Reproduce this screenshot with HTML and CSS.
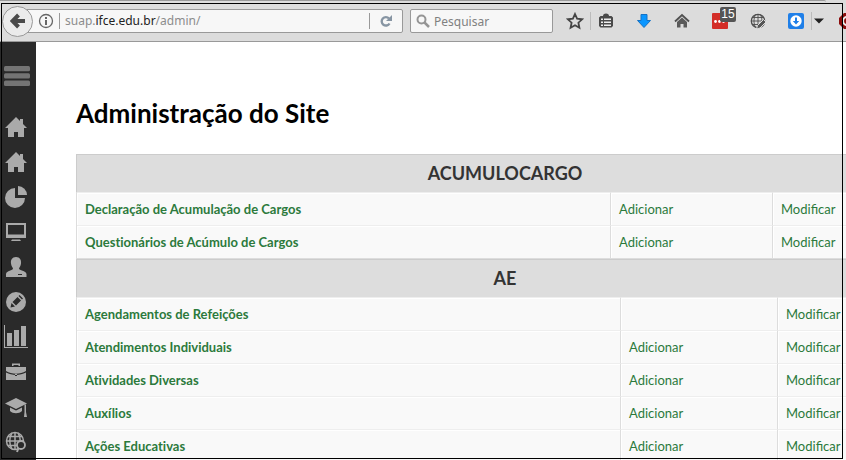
FILE: index.html
```html
<!DOCTYPE html>
<html lang="pt-br">
<head>
  <meta charset="UTF-8" />
  <title>Administração do Site</title>
  <link rel="stylesheet" href="styles.css">
</head>
<body>

  <header class="toolbar">
    <div class="tab-edge"></div>
    <div class="bar">
      <button class="back" aria-label="Voltar">
        <svg width="16" height="16" viewBox="0 0 16 16"><path d="M8.500 2L2.500 8l6 6M3 8h12" fill="none" stroke="#4a4a4a" stroke-width="4"/></svg>
      </button>
      <div class="url">
        <svg width="16" height="16" viewBox="0 0 16 16"><circle cx="8" cy="8" r="6.500" fill="none" stroke="#666" stroke-width="1.300"/><path d="M7 4h2v2H7zM7 7h2v5H7z" fill="#666"/></svg>
        <div class="address" role="textbox" aria-label="Endereço" contenteditable="true" spellcheck="false">suap.<b>ifce.edu.br</b>/admin/</div>
        <button class="reload" aria-label="Recarregar">
          <svg width="14" height="14" viewBox="0 0 14 14"><path d="M10 4.500A4.200 4.200 0 1 0 10.500 9.500" fill="none" stroke="#8795a3" stroke-width="2.400"/><path d="M13 1v6H7z" fill="#8795a3"/></svg>
        </button>
      </div>
      <label class="search">
        <svg width="14" height="14" viewBox="0 0 14 14"><circle cx="5.500" cy="5.500" r="4" fill="none" stroke="#959595" stroke-width="2"/><path d="M8.500 8.500l4.500 4.500" stroke="#959595" stroke-width="2.500"/></svg>
        <input type="text" placeholder="Pesquisar" aria-label="Pesquisar">
      </label>
      <button class="star" aria-label="Favoritar">
        <svg width="18" height="18" viewBox="0 0 18 18"><path d="M9 2l2.100 4.700 5 .6-3.700 3.400 1 5.100L9 13.300l-4.400 2.500 1-5.100L1.900 7.300l5-.6z" fill="none" stroke="#444" stroke-width="1.800"/></svg>
      </button>
      <button class="tool" aria-label="Lista">
        <svg width="16" height="16" viewBox="0 0 16 16"><path d="M5 3a3 2.500 0 0 1 6 0h2.500L15 4.500V13l-1.500 1.500h-11L1 13V4.500L2.500 3z" fill="#4a4a4a"/><path d="M3 5.500h2v1.500H3zM6 5.500h7v1.500H6zM3 8.500h2V10H3zM6 8.500h7V10H6zM3 11.500h2V13H3zM6 11.500h7V13H6z" fill="#eee"/></svg>
      </button>
      <button class="tool" aria-label="Downloads">
        <svg width="16" height="16" viewBox="0 0 16 16"><path d="M5 1.500h6v6h3.500L8 14.500 1.500 7.500H5z" fill="#0a96ff" stroke="#1672c4"/></svg>
      </button>
      <button class="tool" aria-label="Página inicial">
        <svg width="16" height="16" viewBox="0 0 16 16"><path d="M1 8.500L8 2l7 6.500" fill="none" stroke="#505050" stroke-width="1.800"/><path d="M8 4.500l5 4.500v5.500H9.500V11h-3v3.500H3V9z" fill="#5a5a5a"/></svg>
      </button>
      <button class="tool" aria-label="Senhas">
        <svg width="16" height="16" viewBox="0 0 16 16"><rect width="16" height="16" rx="1" fill="#d32d27"/><circle cx="3.500" cy="8.500" r="1.400" fill="#fff"/><circle cx="7.500" cy="8.500" r="1.400" fill="#fff"/><circle cx="11.500" cy="8.500" r="1.400" fill="#fff"/></svg>
        <span class="badge">15</span>
      </button>
      <button class="tool" aria-label="Idioma">
        <svg width="16" height="16" viewBox="0 0 16 16"><circle cx="8" cy="8" r="6.700" fill="none" stroke="#4d4d4d" stroke-width="1.300"/><path d="M8 1v14M1 8h14M2.500 4.500h11M2.500 11.500h11M5.500 1.500C3.500 5 3.500 11 5.500 14.500M10.500 1.500c2 3.500 2 9.500 0 13" fill="none" stroke="#4d4d4d" stroke-width=".9"/><path d="M13.500 6.500L7.500 12.500 6.500 16l3.500-1 6-6z" fill="#555" stroke="#ddd" stroke-width="1"/></svg>
      </button>
      <button class="tool" aria-label="Baixar">
        <svg width="16" height="16" viewBox="0 0 16 16"><rect width="16" height="16" rx="2" fill="#1f7fe8"/><circle cx="8" cy="8" r="5.700" fill="#fff"/><path d="M7 4.500h2V8h2.200L8 11.500 4.800 8H7z" fill="#1f7fe8"/></svg>
      </button>
      <button class="drop" aria-label="Mais opções">
        <svg width="10" height="6" viewBox="0 0 10 6"><path d="M0 0.500h10L5 5.500z" fill="#222"/></svg>
      </button>
      <button class="tool" aria-label="Bloqueador">
        <svg width="16" height="16" viewBox="0 0 16 16"><path d="M5 0h6l5 5v6l-5 5H5l-5-5V5z" fill="#8c0d0d"/><circle cx="8" cy="8" r="4" fill="none" stroke="#eee" stroke-width="2"/></svg>
      </button>
    </div>
  </header>

  <div class="page">
    <nav class="sidebar" aria-label="Menu principal">
      <button class="menu" aria-label="Abrir menu">
        <svg width="26" height="20" viewBox="0 0 26 20" fill="#747474"><rect width="26" height="5.300" rx="1.500"/><rect y="7.300" width="26" height="5.300" rx="1.500"/><rect y="14.600" width="26" height="5.300" rx="1.500"/></svg>
      </button>
      <a href="#" aria-label="Início">
        <svg width="22" height="22" viewBox="0 0 22 22"><path d="M11 1l4 4V3h3v5l4 4h-3v9h-6v-5H9v5H3v-9H0z"/></svg>
      </a>
      <a href="#" aria-label="Página inicial">
        <svg width="22" height="22" viewBox="0 0 22 22"><path d="M11 1l4 4V3h3v5l4 4h-3v9h-6v-5H9v5H3v-9H0z"/></svg>
      </a>
      <a href="#" aria-label="Relatórios">
        <svg width="22" height="22" viewBox="0 0 22 22"><path d="M10 2v10h10A10 10 0 1 1 10 2z"/><path d="M13 0a9 9 0 0 1 9 9h-9z"/></svg>
      </a>
      <a href="#" aria-label="Tecnologia">
        <svg width="22" height="22" viewBox="0 0 22 22"><path fill-rule="evenodd" d="M1 2h20v15H1zM3 4v9.500h16V4z"/><path d="M7 18.500h8l1 1.500H6z"/></svg>
      </a>
      <a href="#" aria-label="Pessoas">
        <svg width="22" height="22" viewBox="0 0 22 22"><path d="M11 1c4 0 5.500 3 5 6.500-.3 2.500-1.500 3.500-2 5 0 2 7 2 7.500 5.500V21H1v-3c.500-3.500 7-3.500 7-5.500-.5-1.500-1.700-2.500-2-5C5.500 4 7 1 11 1z"/><path d="M13 18h4v1h-4z" fill="#2a2a2a"/></svg>
      </a>
      <a href="#" aria-label="Ensino">
        <svg width="22" height="22" viewBox="0 0 22 22"><circle cx="11" cy="11" r="10"/><path d="M5.500 16.500l1-4.500 3.500 3.500zM7.500 11l5-5 3.500 3.500-5 5zM13.500 5l1-1 3.500 3.500-1 1z" fill="#2a2a2a"/></svg>
      </a>
      <a href="#" aria-label="Estatísticas">
        <svg width="24" height="24" viewBox="0 0 24 24"><path d="M0 0h1v22h23v1H0zM3 8h5v13H3zM10 5h5v16h-5zM17 1h5v20h-5z"/></svg>
      </a>
      <a href="#" aria-label="Administração">
        <svg width="22" height="22" viewBox="0 0 22 22"><path d="M7 5V2.500h8V5h-1.500V4h-5v1zM1 6h20v4c-6 3.500-14 3.500-20 0z"/><path fill-rule="evenodd" d="M1 11.500c6 3.200 14 3.200 20 0V19H1zM10 13v2h2v-2z"/></svg>
      </a>
      <a href="#" aria-label="Extensão">
        <svg width="22" height="22" viewBox="0 0 22 22"><path d="M11 2l11 5.500-11 5.500L0 7.500z"/><path d="M5 11.500l6 3 6-3V15c-3 3-9 3-12 0zM19.500 8.500h1.500V16l1 5h-3l.5-5z"/></svg>
      </a>
      <a href="#" aria-label="Internacional">
        <svg width="22" height="22" viewBox="0 0 22 22"><g fill="none" stroke="#aaa" stroke-width="1.500"><circle cx="10" cy="10" r="8.500"/><path d="M10 1v18M1 10h18M3 5.500h14M3 14.500h14M7 2C4 6 4 14 7 18M13 2c3 4 3 12 0 16"/></g><circle cx="16" cy="14" r="4" fill="#2a2a2a" stroke="#aaa" stroke-width="1.800"/><path d="M13.500 17l-1.500 4" stroke="#aaa" stroke-width="2"/></svg>
      </a>
    </nav>

    <main class="content">
      <h1>Administração do Site</h1>

      <table class="app">
        <caption>ACUMULOCARGO</caption>
        <colgroup><col class="name"><col class="add"><col></colgroup>
        <tbody>
          <tr><th scope="row"><a href="#">Declaração de Acumulação de Cargos</a></th><td><a href="#">Adicionar</a></td><td><a href="#">Modificar</a></td></tr>
          <tr><th scope="row"><a href="#">Questionários de Acúmulo de Cargos</a></th><td><a href="#">Adicionar</a></td><td><a href="#">Modificar</a></td></tr>
        </tbody>
      </table>

      <table class="app app-ae">
        <caption>AE</caption>
        <colgroup><col class="name"><col class="add"><col></colgroup>
        <tbody>
          <tr><th scope="row"><a href="#">Agendamentos de Refeições</a></th><td></td><td><a href="#">Modificar</a></td></tr>
          <tr><th scope="row"><a href="#">Atendimentos Individuais</a></th><td><a href="#">Adicionar</a></td><td><a href="#">Modificar</a></td></tr>
          <tr><th scope="row"><a href="#">Atividades Diversas</a></th><td><a href="#">Adicionar</a></td><td><a href="#">Modificar</a></td></tr>
          <tr><th scope="row"><a href="#">Auxílios</a></th><td><a href="#">Adicionar</a></td><td><a href="#">Modificar</a></td></tr>
          <tr><th scope="row"><a href="#">Ações Educativas</a></th><td><a href="#">Adicionar</a></td><td><a href="#">Modificar</a></td></tr>
        </tbody>
      </table>
    </main>
  </div>

  <div class="frame"></div>

</body>
</html>
```
FILE: styles.css
```css
* {
  box-sizing: border-box;
}
body {
  margin: 0;
  height: 100vh;
  display: flex;
  flex-direction: column;
  position: relative;
  overflow: hidden;
  background: #fff;
  font-family: Lato, sans-serif;
  font-size: 13px;
}
button {
  border: none;
  background: none;
  padding: 0;
  cursor: pointer;
}
svg {
  display: block;
  flex: none;
}

/* browser bar */
.toolbar {
  flex: none;
  height: 42px;
  overflow: hidden;
  background: #dcdcdc;
  border-bottom: 1px solid #999;
  font-family: "Noto Sans", sans-serif;
  font-size: 12px;
}
.tab-edge {
  height: 2px;
  margin-right: 20px;
  border-top: 1px solid #999;
  border-top-right-radius: 2px;
}
.bar {
  display: flex;
  align-items: center;
  height: 38px;
  padding-left: 2px;
}
.bar > * {
  flex: none;
}
.back {
  display: flex;
  align-items: center;
  justify-content: center;
  width: 31px;
  height: 31px;
  border: 1px solid #999;
  border-radius: 50%;
  background: #ebebeb;
  z-index: 1;
}
.bar > .url {
  display: flex;
  align-items: center;
  flex: 1 1 0;
  height: 24px;
  margin-left: -8px;
  padding-left: 12px;
  border: 1px solid #999;
  border-radius: 2px;
  background: #f7f7f7;
}
.address {
  flex: 1;
  margin-left: 5px;
  padding-left: 5px;
  border-left: 1px solid #999;
  color: #8c8c8c;
  line-height: 16px;
  white-space: nowrap;
}
.address b {
  font-weight: normal;
  color: #222;
}
.reload {
  display: flex;
  align-items: center;
  justify-content: center;
  width: 33px;
  height: 16px;
  border-left: 1px solid #999;
}
.search {
  display: flex;
  align-items: center;
  width: 143px;
  height: 24px;
  margin: 0 7px;
  padding-left: 5px;
  border: 1px solid #999;
  border-radius: 2px;
  background: #f7f7f7;
}
.search input {
  flex: 1;
  min-width: 0;
  margin-left: 4px;
  padding: 0;
  border: none;
  background: none;
  font-family: inherit;
  font-size: 12px;
}
.search input::placeholder {
  color: #808080;
}
.star {
  padding: 0 6px;
  border-right: 1px solid #bbb;
}
.tool {
  display: flex;
  justify-content: center;
  position: relative;
  width: 38px;
}
.star + .tool {
  margin-left: -4px;
}
.badge {
  position: absolute;
  left: 19px;
  top: -6px;
  width: 16px;
  border-radius: 2px;
  background: #555;
  color: #fff;
  font-size: 12px;
  line-height: 15px;
}
.drop {
  width: 17px;
  height: 18px;
  margin-left: -4px;
  padding: 0 3px 0 2px;
  border-left: 1px solid #bbb;
}
.drop + .tool {
  margin-right: -20px;
}

/* site */
.page {
  flex: 1;
  display: flex;
  min-height: 0;
}
.sidebar {
  flex: none;
  display: flex;
  flex-direction: column;
  width: 36px;
  padding-right: 4px;
  background: #2a2a2a;
}
.sidebar a, .menu {
  flex: none;
  display: flex;
  align-items: center;
  justify-content: center;
  height: 35px;
  fill: #aaa;
}
.sidebar .menu {
  height: 67px;
  padding-left: 2px;
}
.content {
  flex: 1;
  min-width: 0;
  overflow: hidden;
  padding: 55px 0 0 40px;
}
h1 {
  margin: 0 0 24px;
  color: #000;
  font-size: 26px;
  line-height: 33px;
}
.app {
  width: 858px;
  table-layout: fixed;
  border: 1px solid #ddd;
  border-top: none;
  border-spacing: 0;
}
.app caption {
  height: 38px;
  border: 1px solid #ccc;
  border-bottom: none;
  background: #ddd;
  color: #333;
  font-size: 18px;
  font-weight: bold;
  line-height: 37px;
}
.app th, .app td {
  height: 33px;
  padding: 0 8px;
  border-top: 1px solid #eee;
  background: #f9f9f9;
  box-shadow: inset 1px 1px #fff;
  text-align: left;
}
.app th {
  font-variant-ligatures: no-common-ligatures;
}
.app td {
  border-left: 1px solid #ddd;
}
.app a {
  color: #2c7a3c;
  text-decoration: none;
}
.app a:hover {
  text-decoration: underline;
}
.name {
  width: 533px;
}
.add {
  width: 162px;
}
.app-ae .name {
  width: 543px;
}
.app-ae .add {
  width: 157px;
}

/* thin black outline over the window */
.frame {
  position: absolute;
  top: 3px;
  right: 3px;
  bottom: 1px;
  left: 1px;
  border: 1px solid #000;
  pointer-events: none;
  z-index: 2;
}
```
